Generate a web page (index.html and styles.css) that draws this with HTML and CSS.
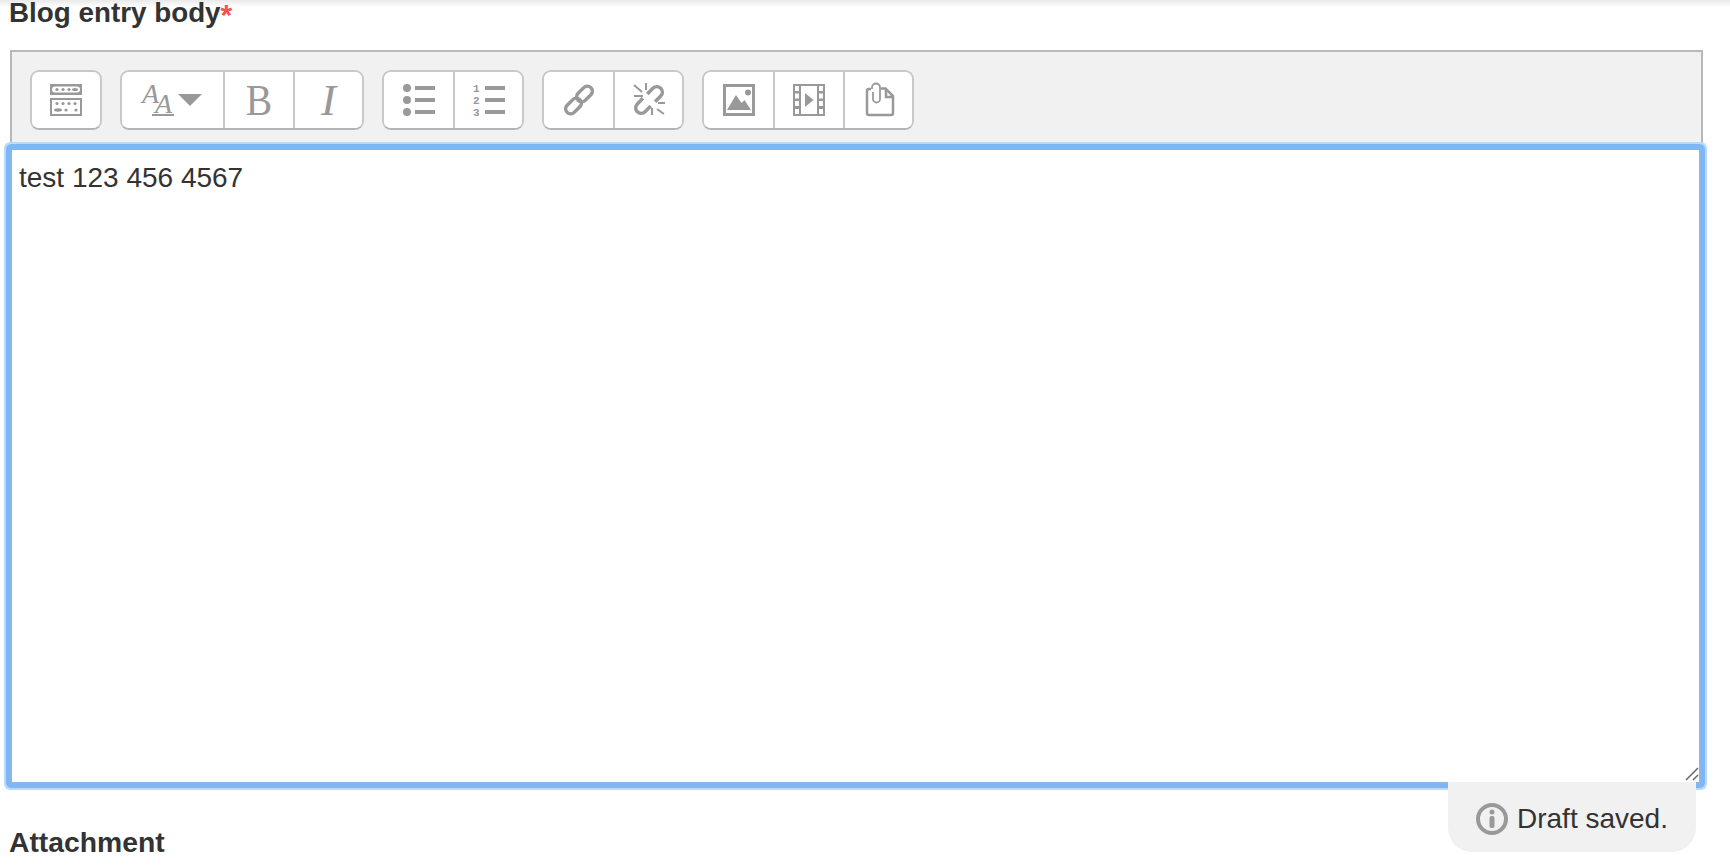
FILE: index.html
```html
<!DOCTYPE html>
<html lang="en">

<head>
    <meta charset="UTF-8">
    <title>Blog entry</title>
    <link rel="stylesheet" href="styles.css">
</head>

<body>
    <div class="campo">
        <label class="rotulo">Blog entry body<span class="obrigatorio">*</span></label>

        <div class="barra">
            <div class="grupo">
                <button class="botao">
                    <svg class="icone" viewBox="0 0 32 32">
                        <path fill="#999" fill-rule="evenodd" d="M0 0h32v11H0zM5 2.500a3 3 0 0 0 0 6h22a3 3 0 0 0 0-6zM0 14h32v18H0zM2 16v14h28V16z" />
                        <g fill="#999">
                            <circle cx="7" cy="5.500" r="1.600" /><circle cx="13" cy="5.500" r="1.600" /><circle cx="19" cy="5.500" r="1.600" /><ellipse cx="25" cy="5.500" rx="3" ry="1.600" />
                            <circle cx="7" cy="19.500" r="1.600" /><circle cx="13" cy="19.500" r="1.600" /><circle cx="19" cy="19.500" r="1.600" /><circle cx="25" cy="19.500" r="1.600" />
                            <ellipse cx="8" cy="26" rx="4" ry="1.700" /><circle cx="16" cy="26" r="1.600" /><circle cx="26" cy="26" r="1.600" />
                        </g>
                    </svg>
                </button>
            </div>

            <div class="grupo">
                <button class="botao botao-titulo">
                    <svg class="icone-titulo" viewBox="0 0 60 32">
                        <text class="letra-a" x="0" y="19">A</text>
                        <text class="letra-a" x="13" y="29">A</text>
                        <rect x="10" y="30" width="22" height="2" fill="#999" />
                        <path d="M36 10h24l-12 12z" fill="#999" />
                    </svg>
                </button>
                <button class="botao"><span class="letra-b">B</span></button>
                <button class="botao"><span class="letra-i">I</span></button>
            </div>

            <div class="grupo">
                <button class="botao">
                    <svg class="icone" viewBox="0 0 32 32">
                        <g fill="#999">
                            <circle cx="4" cy="4" r="4" /><circle cx="4" cy="16" r="4" /><circle cx="4" cy="28" r="4" />
                            <rect x="12" y="2" width="20" height="4" /><rect x="12" y="14" width="20" height="4" /><rect x="12" y="26" width="20" height="4" />
                        </g>
                    </svg>
                </button>
                <button class="botao">
                    <svg class="icone" viewBox="0 0 32 32">
                        <g fill="#999">
                            <text class="numero" x="0" y="8">1</text><text class="numero" x="0" y="20">2</text><text class="numero" x="0" y="32">3</text>
                            <rect x="12" y="2" width="20" height="4" /><rect x="12" y="14" width="20" height="4" /><rect x="12" y="26" width="20" height="4" />
                        </g>
                    </svg>
                </button>
            </div>

            <div class="grupo">
                <button class="botao">
                    <svg class="icone" viewBox="0 0 32 32">
                        <g fill="none" stroke="#999" stroke-width="3.500">
                            <rect x="12.500" y="5" width="18" height="10" rx="5" transform="rotate(-45 21.500 10)" />
                            <rect x="1.500" y="17" width="18" height="10" rx="5" transform="rotate(-45 10.500 22)" />
                        </g>
                    </svg>
                </button>
                <button class="botao">
                    <svg class="icone" viewBox="0 0 32 32">
                        <g fill="none" stroke="#999" stroke-width="3.500">
                            <path d="M14.300 9.900l5.600-5.600a5.500 5.500 0 0 1 7.800 7.800l-5.600 5.600" />
                            <path d="M17.700 22.100l-5.600 5.600a5.500 5.500 0 0 1-7.800-7.800l5.600-5.600" />
                        </g>
                        <path d="M1 12h9M1 1l8 7M13 -1v7M25 19h7M24 25l7 5M19 24v7" stroke="#999" stroke-width="2" fill="none" />
                    </svg>
                </button>
            </div>

            <div class="grupo">
                <button class="botao">
                    <svg class="icone" viewBox="0 0 32 32">
                        <rect x="1.500" y="1.500" width="29" height="29" fill="none" stroke="#999" stroke-width="3" />
                        <circle cx="25" cy="8.500" r="3" fill="#999" />
                        <path d="M4 26l9-15 5.500 8 3-3 6.500 10z" fill="#999" />
                    </svg>
                </button>
                <button class="botao">
                    <svg class="icone" viewBox="0 0 32 32">
                        <path fill="#999" fill-rule="evenodd" d="M0 0h32v32H0zM2 2v5h4V2zM2 9.500v5h4v-5zM2 17v5h4v-5zM2 25v5h4v-5zM8 2v28h16V2zM26 2v5h4V2zM26 9.500v5h4v-5zM26 17v5h4v-5zM26 25v5h4v-5z" />
                        <path d="M12 9l8.500 7-8.500 7z" fill="#999" />
                    </svg>
                </button>
                <button class="botao">
                    <svg class="icone" viewBox="0 0 32 32">
                        <path d="M8 5H6a2 2 0 0 0-2 2v22a2 2 0 0 0 2 2h22a2 2 0 0 0 2-2V12l-7.500-7.500H18" fill="none" stroke="#999" stroke-width="2.500" />
                        <path d="M23 5v8h7" fill="none" stroke="#999" stroke-width="2.500" />
                        <path d="M10 8v7a3.500 3.500 0 0 0 7 0V3.500a4 4 0 0 0-8 0V5" fill="none" stroke="#999" stroke-width="1.800" />
                    </svg>
                </button>
            </div>
        </div>

        <div class="editor">
            <p class="texto">test 123 456 4567</p>
            <svg class="alca" viewBox="0 0 14 14">
                <path d="M1 13L13 1M8 13l5-5" stroke="#666" stroke-width="1.500" fill="none" />
            </svg>
            <div class="rascunho">
                <svg class="icone-info" viewBox="0 0 32 32">
                    <circle cx="16" cy="16" r="14" fill="none" stroke="#999" stroke-width="4" />
                    <circle cx="16" cy="9" r="2.500" fill="#999" />
                    <rect x="13.500" y="13" width="5" height="12" rx="2" fill="#999" />
                </svg>
                <span class="texto-rascunho">Draft saved.</span>
            </div>
        </div>

        <label class="rotulo rotulo-anexo">Attachment</label>
    </div>
</body>

</html>
```

FILE: styles.css
```css
* {
    margin: 0;
    padding: 0;
    box-sizing: border-box;
    font-family: 'Liberation Sans', Arial, sans-serif;
}

body {
    background: linear-gradient(#e9e9e9, #ffffff 7px) no-repeat;
    color: #333333;
    overflow: hidden;
}

.campo {
    padding: 0 27px 0 10px;
}

.rotulo {
    display: block;
    height: 50px;
    margin-left: -1px;
    font-size: 27.800px;
    font-weight: 700;
    line-height: 26px;
    color: #333333;
}

.obrigatorio {
    color: #f84f4f;
    font-size: 30px;
    line-height: 0;
    vertical-align: -3px;
}

.barra {
    display: flex;
    gap: 18px;
    height: 98px;
    padding: 18px 18px 0;
    background-color: #f1f1f1;
    border: 2px solid #b8b8b8;
    border-bottom: none;
}

.grupo {
    display: flex;
    height: 60px;
    background-color: #ffffff;
    border: 2px solid #c8c8c8;
    border-bottom-color: #b4b4b4;
    border-radius: 9px;
    overflow: hidden;
}

.botao {
    display: flex;
    justify-content: center;
    align-items: center;
    width: 70px;
    background-color: #ffffff;
    border: none;
    border-left: 2px solid #c8c8c8;
}

.botao:first-child,
.botao:last-child {
    width: 69px;
}

.botao:first-child {
    border-left: none;
}

.botao:only-child {
    width: 68px;
}

.botao.botao-titulo {
    width: 101px;
}

.icone {
    width: 32px;
    height: 32px;
    overflow: visible;
}

.icone-titulo {
    width: 60px;
    height: 32px;
    margin-right: 2px;
    overflow: visible;
}

.letra-a {
    font-family: 'Liberation Serif', serif;
    font-style: italic;
    font-size: 28px;
    fill: #999999;
}

.numero {
    font-family: 'Liberation Mono', monospace;
    font-size: 11px;
    font-weight: 700;
}

.letra-b {
    font-family: 'Liberation Serif', serif;
    font-size: 45px;
    line-height: 45px;
    color: #999999;
    transform: scaleX(0.88);
}

.letra-i {
    font-family: 'Liberation Serif', serif;
    font-style: italic;
    font-size: 45px;
    line-height: 45px;
    color: #999999;
}

.editor {
    position: relative;
    height: 636px;
    margin-right: 2px;
    padding: 13px 7px;
    background-color: #ffffff;
    border: 2px solid #8ab6e8;
    border-top-color: #7fb6f6;
    border-radius: 2px;
    box-shadow: 0 0 0 4px #7fb6f6, 0 0 0 6px #b9dbfb;
}

.texto {
    font-size: 28px;
    line-height: 30px;
    color: #333333;
}

.alca {
    position: absolute;
    right: 0;
    bottom: 1px;
    width: 14px;
    height: 14px;
}

.rascunho {
    position: absolute;
    top: 100%;
    right: 3px;
    display: flex;
    align-items: center;
    gap: 9px;
    width: 248px;
    height: 70px;
    padding: 4px 0 0 28px;
    background-color: #f1f1f1;
    border-radius: 0 0 24px 24px;
}

.icone-info {
    width: 32px;
    height: 32px;
}

.texto-rascunho {
    font-size: 28px;
    color: #333333;
}

.rotulo-anexo {
    margin-top: 45px;
    font-size: 28.300px;
}
```
